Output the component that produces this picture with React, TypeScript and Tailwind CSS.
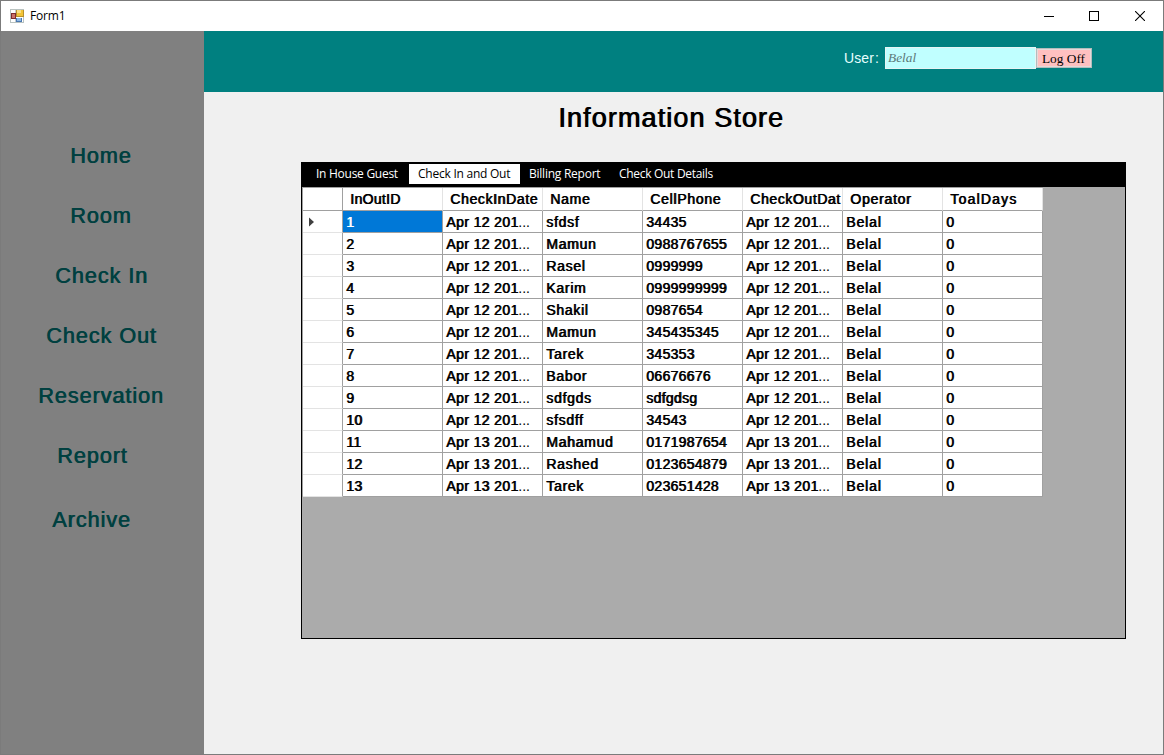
import React from "react";

const navItems = [
  { label: "Home", place: "h-[60px] pl-[69px]" },
  { label: "Room", place: "h-[60px] pl-[69px]" },
  { label: "Check In", place: "h-[60px] pl-[54px]" },
  { label: "Check Out", place: "h-[60px] pl-[45px]" },
  { label: "Reservation", place: "h-[60px] pl-[37px]" },
  { label: "Report", place: "h-[60px] pl-[56px]" },
  { label: "Archive", place: "h-[68px] pl-[51px]" },
];

const tabs = [
  { label: "In House Guest", style: "w-[102px] pl-[9px] tracking-[-0.27px] text-white" },
  { label: "Check In and Out", style: "w-[111px] pl-[9px] tracking-[-0.24px] bg-white text-black" },
  { label: "Billing Report", style: "w-[90px] pl-[9px] tracking-[-0.24px] text-white" },
  { label: "Check Out Details", style: "w-[112px] pl-[9px] tracking-[-0.3px] text-white" },
];

const columns = [
  { label: "InOutID", tracking: "tracking-[0.3px]" },
  { label: "CheckInDate", tracking: "tracking-[0.63px]" },
  { label: "Name", tracking: "tracking-[0.7px]" },
  { label: "CellPhone", tracking: "tracking-[0.7px]" },
  { label: "CheckOutDat", tracking: "tracking-[0.58px]" },
  { label: "Operator", tracking: "tracking-[0.75px]" },
  { label: "ToalDays", tracking: "tracking-[1.2px]" },
];

const cellTracking = [
  "tracking-[0.3px]",
  "tracking-[0.38px]",
  "tracking-[0.7px]",
  "tracking-[0.28px]",
  "tracking-[0.38px]",
  "tracking-[0.85px]",
  "tracking-[0.3px]",
];

const guests = [
  ["sfdsf", "34435"],
  ["Mamun", "0988767655"],
  ["Rasel", "0999999"],
  ["Karim", "0999999999"],
  ["Shakil", "0987654"],
  ["Mamun", "345435345"],
  ["Tarek", "345353"],
  ["Babor", "06676676"],
  ["sdfgds", "sdfgdsg"],
  ["sfsdff", "34543"],
  ["Mahamud", "0171987654"],
  ["Rashed", "0123654879"],
  ["Tarek", "023651428"],
];

const rows = guests.map(([name, phone], i) => {
  const date = i < 10 ? "Apr 12 201" : "Apr 13 201";
  return [String(i + 1), date, name, phone, date, "Belal", "0"];
});

function AppIcon() {
  return (
    <svg width="14" height="14" viewBox="0 0 14 14" shapeRendering="crispEdges">
      <rect x="0.5" y="0.5" width="13" height="13" fill="#fff" stroke="#b9c2c0" />
      <rect x="5" y="1" width="1" height="12" fill="#c5ccd0" />
      <rect x="1" y="4" width="5" height="6" fill="#7d2b2b" />
      <rect x="2" y="5" width="3" height="4" fill="#c9706a" />
      <rect x="6" y="1" width="8" height="7" fill="#b8912c" />
      <rect x="7" y="1" width="6" height="6" fill="#f2c437" />
      <rect x="7" y="1" width="4" height="3" fill="#f9df86" />
      <rect x="6" y="9" width="6" height="4" fill="#4a78b0" />
      <rect x="7" y="9" width="4" height="3" fill="#8fb8e4" />
    </svg>
  );
}

function TitleBar() {
  return (
    <header className="flex h-[30px] shrink-0 items-center bg-white">
      <div className="pl-[9px]">
        <AppIcon />
      </div>
      <span className="pl-[6px] font-['Open_Sans','Noto_Sans',sans-serif] text-[12px] leading-[16px] tracking-[-0.2px] text-black">Form1</span>
      <div className="ml-auto flex items-center pr-[18px] text-black">
        <svg width="10" height="10" viewBox="0 0 10 10" className="mr-[35px]" shapeRendering="crispEdges">
          <rect x="0" y="5" width="10" height="1" fill="currentColor" />
        </svg>
        <svg width="10" height="10" viewBox="0 0 10 10" className="mr-[36px]" shapeRendering="crispEdges">
          <rect x="0.5" y="0.5" width="9" height="9" fill="none" stroke="currentColor" />
        </svg>
        <svg width="10" height="10" viewBox="0 0 10 10">
          <path d="M0 0L10 10M10 0L0 10" stroke="currentColor" strokeWidth="1.1" />
        </svg>
      </div>
    </header>
  );
}

function Sidebar() {
  return (
    <nav className="flex w-[203px] shrink-0 flex-col bg-[#808080] pt-[95px] font-['Liberation_Sans',Arial,sans-serif] text-[21.6px] leading-[26px] tracking-[0.95px] text-[#004040] [text-shadow:0.8px_0_0_#004040]">
      {navItems.map((item) => (
        <a key={item.label} className={`flex items-center whitespace-nowrap ${item.place}`}>
          {item.label}
        </a>
      ))}
    </nav>
  );
}

function UserBar() {
  return (
    <div className="flex h-[61px] shrink-0 items-start bg-[#008080] pl-[640px] pt-[16px]">
      <span className="w-[41px] whitespace-nowrap pt-[2px] font-['Liberation_Sans',Arial,sans-serif] text-[14px] leading-[18px] tracking-[0.1px] text-[#e8ffff]">
        User<span className="pl-px">:</span>
      </span>
      <div className="flex h-[22px] w-[151px] items-center border border-[#e8f4f4] bg-[#c0ffff] pl-[2px] font-['Liberation_Serif',serif] text-[13.33px] italic leading-[18px] text-[#5c7878]">
        Belal
      </div>
      <button className="mt-px flex h-[20px] w-[56px] items-center justify-center whitespace-nowrap border border-[#b4bcbc] bg-[#ffc0c0] pr-px pt-[2px] font-['Liberation_Serif',serif] text-[13.33px] leading-[18px] text-black shadow-[inset_0_0_0_1px_#e4dada]">
        Log Off
      </button>
    </div>
  );
}

function DataGrid() {
  return (
    <div className="flex w-[741px] flex-col border-l border-t border-[#a0a0a0] font-['Liberation_Sans',Arial,sans-serif] text-[14px] leading-[20px] text-black [text-shadow:0.8px_0_0_currentColor]">
      <div className="flex h-[23px] bg-white">
        <div className="w-[40px] shrink-0 border-b border-r border-[#a0a0a0]" />
        {columns.map((column) => (
          <div
            key={column.label}
            className={`w-[100px] shrink-0 whitespace-nowrap border-b border-r border-b-[#a0a0a0] border-r-[#e3e3e3] pl-[7px] pt-px ${column.tracking}`}
          >
            {column.label}
          </div>
        ))}
      </div>
      {rows.map((row, r) => (
        <div key={r} className="flex h-[22px] bg-white">
          <div className="flex w-[40px] shrink-0 items-center border-b border-r border-b-[#e3e3e3] border-r-[#a0a0a0] pl-[6px]">
            {r === 0 && (
              <svg width="5" height="10" viewBox="0 0 5 10">
                <path d="M0 0.5L5 5L0 9.5Z" fill="#404040" />
              </svg>
            )}
          </div>
          {row.map((value, c) => (
            <div
              key={c}
              className={`w-[100px] shrink-0 overflow-hidden whitespace-nowrap border-b border-r border-[#a0a0a0] pl-[3px] pt-px ${cellTracking[c]} ${
                r === 0 && c === 0 ? "bg-[#0078d7] text-white" : ""
              }`}
            >
              {value}
              {(c === 1 || c === 4) && <span className="tracking-[0px] [text-shadow:none]">...</span>}
            </div>
          ))}
        </div>
      ))}
    </div>
  );
}

export default function App() {
  return (
    <div className="flex h-[755px] w-[1164px] flex-col overflow-hidden border border-[#7b7b7b] bg-[#f0f0f0]">
      <TitleBar />
      <div className="flex min-h-0 flex-1">
        <Sidebar />
        <main className="flex min-w-0 flex-1 flex-col">
          <UserBar />
          <h1 className="h-[70px] whitespace-nowrap pl-[354px] pt-[10px] font-['Liberation_Sans',Arial,sans-serif] text-[27px] leading-[32px] tracking-[1.1px] text-black [text-shadow:0.9px_0_0_#000]">
            Information Store
          </h1>
          <section className="ml-[97px] flex h-[477px] w-[825px] flex-col border border-black bg-[#ababab]">
            <div className="flex h-[24px] shrink-0 bg-black pl-[5px] pt-px">
              {tabs.map((tab) => (
                <div
                  key={tab.label}
                  className={`h-[20px] whitespace-nowrap font-['Open_Sans','Noto_Sans',sans-serif] text-[12px] leading-[20px] ${tab.style}`}
                >
                  {tab.label}
                </div>
              ))}
            </div>
            <DataGrid />
          </section>
        </main>
      </div>
    </div>
  );
}
